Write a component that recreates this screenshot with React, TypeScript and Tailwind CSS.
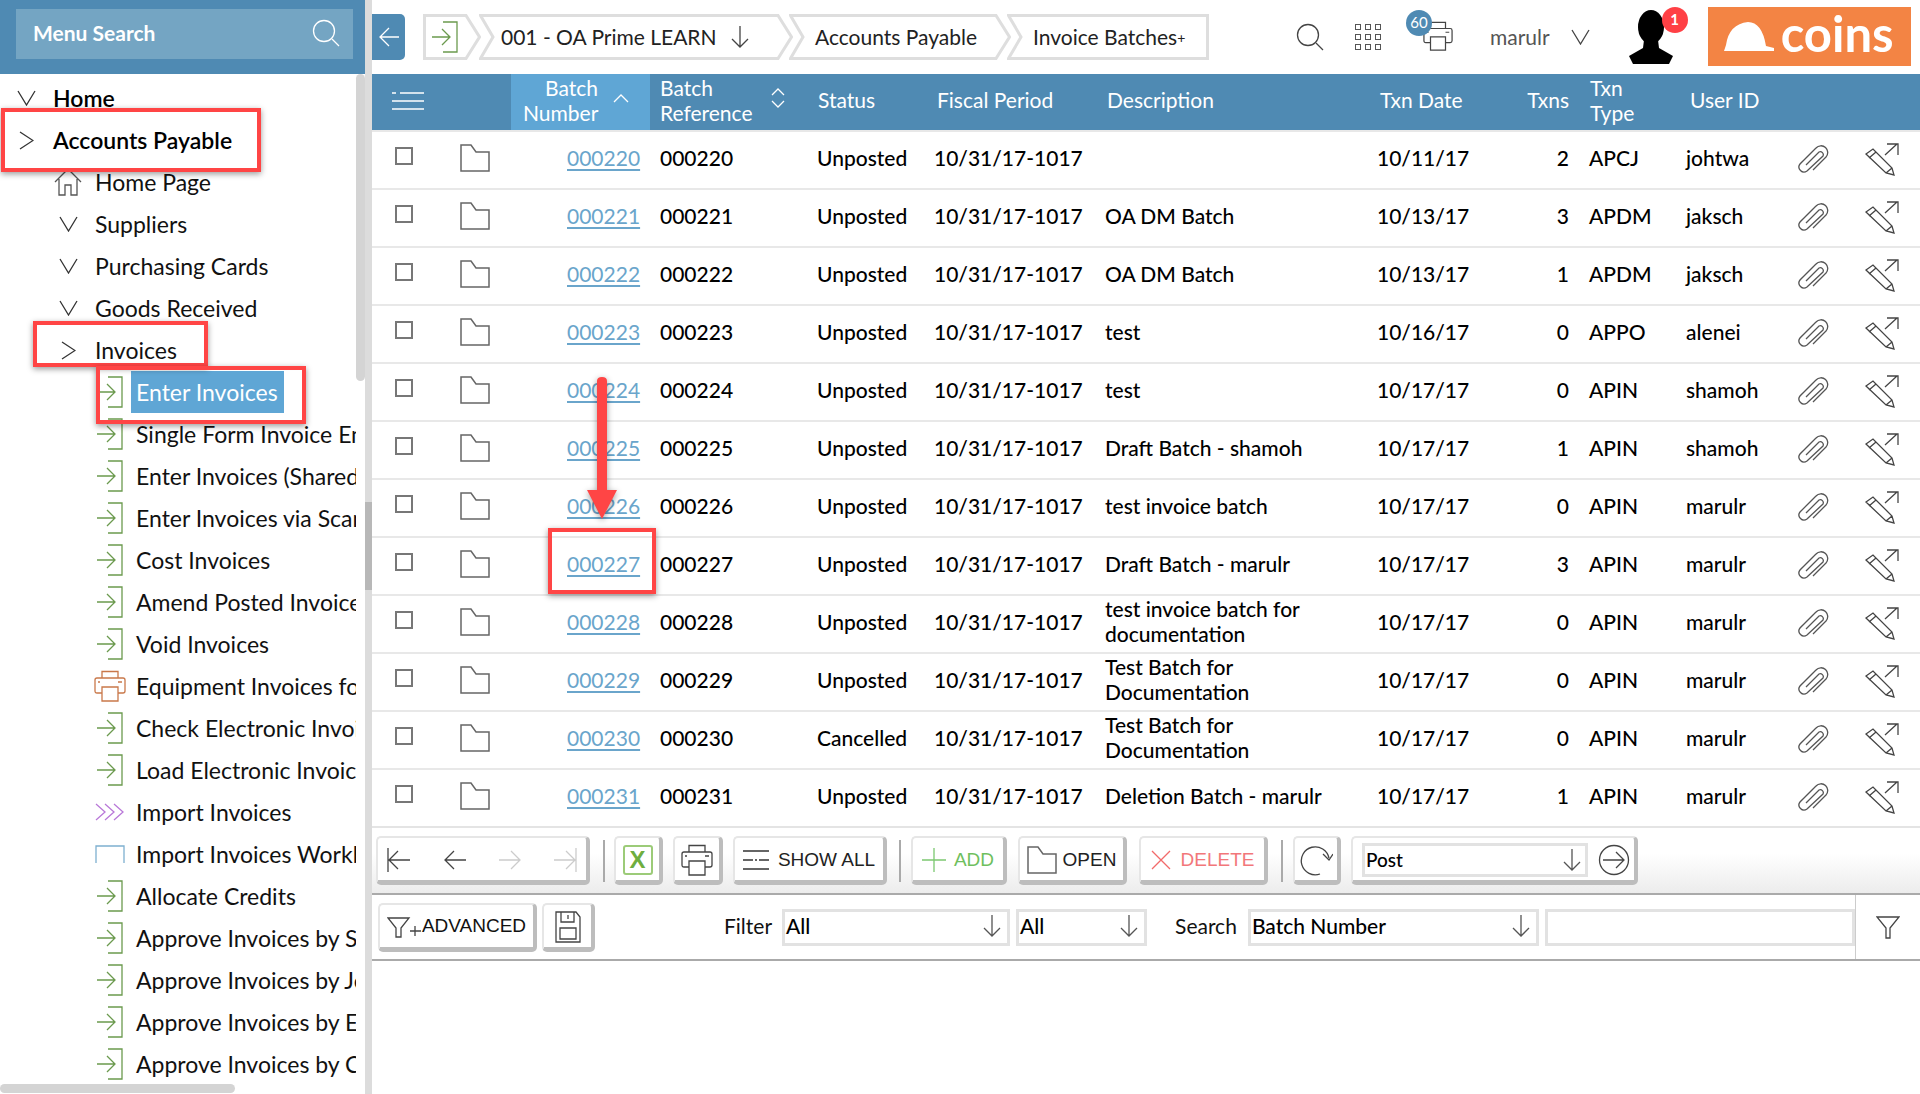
import * as React from "react";

const rows = [
  ["000220", "Unposted", "", "10/11/17", "2", "APCJ", "johtwa"],
  ["000221", "Unposted", "OA DM Batch", "10/13/17", "3", "APDM", "jaksch"],
  ["000222", "Unposted", "OA DM Batch", "10/13/17", "1", "APDM", "jaksch"],
  ["000223", "Unposted", "test", "10/16/17", "0", "APPO", "alenei"],
  ["000224", "Unposted", "test", "10/17/17", "0", "APIN", "shamoh"],
  ["000225", "Unposted", "Draft Batch - shamoh", "10/17/17", "1", "APIN", "shamoh"],
  ["000226", "Unposted", "test invoice batch", "10/17/17", "0", "APIN", "marulr"],
  ["000227", "Unposted", "Draft Batch - marulr", "10/17/17", "3", "APIN", "marulr"],
  ["000228", "Unposted", "test invoice batch for documentation", "10/17/17", "0", "APIN", "marulr"],
  ["000229", "Unposted", "Test Batch for Documentation", "10/17/17", "0", "APIN", "marulr"],
  ["000230", "Cancelled", "Test Batch for Documentation", "10/17/17", "0", "APIN", "marulr"],
  ["000231", "Unposted", "Deletion Batch - marulr", "10/17/17", "1", "APIN", "marulr"],
];

const menuItems: [string, string][] = [
  ["Enter Invoices", "enter"],
  ["Single Form Invoice Entry", "enter"],
  ["Enter Invoices (Shared Services)", "enter"],
  ["Enter Invoices via Scanning", "enter"],
  ["Cost Invoices", "enter"],
  ["Amend Posted Invoices", "enter"],
  ["Void Invoices", "enter"],
  ["Equipment Invoices for Review", "print"],
  ["Check Electronic Invoices", "enter"],
  ["Load Electronic Invoices", "enter"],
  ["Import Invoices", "import"],
  ["Import Invoices Workbench", "work"],
  ["Allocate Credits", "enter"],
  ["Approve Invoices by Supplier", "enter"],
  ["Approve Invoices by Job", "enter"],
  ["Approve Invoices by Employee", "enter"],
  ["Approve Invoices by Cost Code", "enter"],
];

function Ico({ w, h, vb, className, children }: { w: number; h: number; vb?: string; className?: string; children: React.ReactNode }) {
  return (
    <svg width={w} height={h} viewBox={vb ?? `0 0 ${w} ${h}`} fill="none" stroke="currentColor" strokeWidth="1.3" className={`shrink-0 ${className ?? ""}`}>
      {children}
    </svg>
  );
}

const Down = ({ className }: { className?: string }) => (
  <Ico w={21} h={16} className={className}><path d="M2 1 L10.5 15 L19 1" /></Ico>
);
const Right = ({ className }: { className?: string }) => (
  <Ico w={15} h={19} className={className}><path d="M1 1 L14 9.5 L1 18" /></Ico>
);
const ArrowDown = ({ className }: { className?: string }) => (
  <Ico w={20} h={24} className={className}><path d="M10 1 V22 M2 14 L10 22 L18 14" /></Ico>
);
const EnterIcon = () => (
  <Ico w={28} h={32} className="text-[#6b9a4e]"><path d="M12 1 H26 V31 H12 M1 16 H19 M11 8 L19 16 L11 24" /></Ico>
);
const PrinterIcon = ({ className, size = 32 }: { className?: string; size?: number }) => (
  <Ico w={size} h={size} vb="0 0 32 32" className={className}>
    <path d="M8 8 V1.5 H24 V8 M8 23 H3 Q1 23 1 21 V10 Q1 8 3 8 H29 Q31 8 31 10 V21 Q31 23 29 23 H24 M8 17 H24 V31 H8 Z M4 12 H6 M24 12 H28" />
  </Ico>
);
const Folder = ({ className }: { className?: string }) => (
  <Ico w={30} h={28} className={`text-[#666] ${className ?? ""}`}><path d="M1 1 H11 L16 8 H29 V27 H1 Z" strokeWidth="1.5" /></Ico>
);
const Clip = () => (
  <Ico w={32} h={28} className="text-[#555]">
    <path d="M9 20 L22 7 A3 3 0 0 1 26 11 L10 26 A5 5 0 0 1 3 19 L19 3 A6.5 6.5 0 0 1 29 12 L16 25" />
  </Ico>
);
const Pencil = () => (
  <Ico w={34} h={33} className="text-[#444]">
    <path d="M1 11 L8 6 L27 25 L29 32 L21 30 Z M4 15 L11 9 M21 30 L27 25 M20 12 L32 1 M22 1 H33 V12" />
  </Ico>
);
const SearchIcon = ({ className }: { className?: string }) => (
  <Ico w={28} h={28} className={className}><circle cx="12" cy="12" r="10.5" /><path d="M20 20 L27 27" /></Ico>
);

function Btn({ className, start, children }: { className?: string; start?: boolean; children: React.ReactNode }) {
  return (
    <div className={`flex h-[49px] items-center ${start ? "" : "justify-center"} rounded-[5px] border-2 border-[#e6e6e6] border-r-[4px] border-r-[#bdbdbd] border-b-[5px] border-b-[#bdbdbd] bg-white pt-[2px] font-['Liberation_Sans',sans-serif] text-[19px] ${className ?? ""}`}>
      {children}
    </div>
  );
}

const Sep = ({ className }: { className?: string }) => <div className={`h-[42px] w-[2px] bg-[#aaa] ${className ?? ""}`} />;

function Select({ label, className }: { label: string; className?: string }) {
  return (
    <div className={`flex h-[37px] items-center justify-between border-[3px] border-[#e2e2e2] bg-white pb-[2px] pl-[1px] pr-[5px] text-[21px] font-medium text-black ${className ?? ""}`}>
      <span>{label}</span>
      <ArrowDown className="text-[#555]" />
    </div>
  );
}

const gridCols = "grid grid-cols-[88px_51px_149px_157px_117px_171px_272px_123px_69px_117px_104px_60px_70px]";

function Sidebar() {
  return (
    <aside className="relative h-full w-[372px] shrink-0 overflow-hidden border-r-[7px] border-[#dcdcdc]">
      <div className="flex h-[74px] w-[372px] items-start bg-[#4f8ab3] pl-4 pt-[9px]">
        <div className="flex h-[50px] w-[337px] items-center justify-between bg-[#74a5c3] pb-[2px] pl-[17px] pr-[13px] text-[21px] font-bold text-white">
          <span>Menu Search</span>
          <SearchIcon />
        </div>
      </div>
      <div className="w-[356px] overflow-hidden pt-[3px] text-[23px] text-[#111]">
        <div className="flex h-[42px] items-center pl-4 font-semibold text-black">
          <Down className="mr-4 text-[#333]" /><span>Home</span>
        </div>
        <div className="flex h-[42px] items-center pl-[19px] font-semibold text-black">
          <Right className="mr-[19px] text-[#333]" /><span>Accounts Payable</span>
        </div>
        <div className="flex h-[42px] items-center pl-[54px]">
          <Ico w={28} h={28} className="mr-[13px] text-[#555]"><path d="M1 14 L14 1 L27 14 M5 11 V27 H11 V17 H17 V27 H23 V11" /></Ico>
          <span>Home Page</span>
        </div>
        {["Suppliers", "Purchasing Cards", "Goods Received"].map((t) => (
          <div key={t} className="flex h-[42px] items-center pl-[58px]">
            <Down className="mr-4 text-[#333]" /><span>{t}</span>
          </div>
        ))}
        <div className="flex h-[42px] items-center pl-[61px]">
          <Right className="mr-[19px] text-[#333]" /><span>Invoices</span>
        </div>
        {menuItems.map(([label, kind], i) => (
          <div key={label} className="flex h-[42px] items-center whitespace-nowrap pl-[94px]">
            <span className="flex w-[32px] shrink-0 justify-center">
              {kind === "enter" && <EnterIcon />}
              {kind === "print" && <PrinterIcon className="text-[#c9784a]" />}
              {kind === "import" && (
                <Ico w={30} h={18} className="text-[#b978d8]"><path d="M1 1 L10 9 L1 17 M10 1 L19 9 L10 17 M19 1 L28 9 L19 17" /></Ico>
              )}
              {kind === "work" && (
                <Ico w={30} h={18} className="text-[#7eb0d0]"><path d="M1 18 V1 H29 V18" /></Ico>
              )}
            </span>
            <span className={i === 0 ? "ml-[5px] flex h-[42px] w-[153px] items-center bg-[#5fa6d5] pl-[5px] text-white" : "ml-[10px]"}>{label}</span>
          </div>
        ))}
      </div>
      {/* scrollbars */}
      <div className="absolute right-0 top-[74px] h-[307px] w-[9px] rounded-[5px] bg-[#d4d4d4]" />
      <div className="absolute bottom-[1px] left-0 h-[9px] w-[235px] rounded-[5px] bg-[#d4d4d4]" />
    </aside>
  );
}

function Crumb({ w, first, last, className, children }: { w: number; first?: boolean; last?: boolean; className?: string; children: React.ReactNode }) {
  const outline = `M1.5 1.5 H${last ? w - 1.5 : w - 15} ${last ? "V44.5" : `L${w - 1.5} 23 L${w - 15} 44.5`} H1.5 ${first ? "Z" : "L14 23 Z"}`;
  return (
    <div className={`relative flex h-[46px] items-center ${className ?? ""}`} style={{ width: w }}>
      <svg width={w} height={46} viewBox={`0 0 ${w} 46`} fill="#fff" stroke="#dedede" strokeWidth="3" className="absolute left-0 top-0">
        <path d={outline} />
      </svg>
      <div className="relative flex items-center">{children}</div>
    </div>
  );
}

function TopBar() {
  return (
    <div className="flex h-[74px] items-start">
      <div className="mt-[14px] flex h-[46px] w-[33px] items-center justify-center rounded-r-[5px] bg-[#4f8ab3] text-white">
        <Ico w={22} h={24}><path d="M21 12 H2 M11 3 L2 12 L11 21" /></Ico>
      </div>
      <div className="ml-[18px] mt-[14px] flex h-[46px] text-[21px] text-[#222]">
        <Crumb w={58} first className="pl-[8px]"><EnterIcon /></Crumb>
        <Crumb w={314} className="-ml-[2px] pl-[22px]">
          <span>001 - OA Prime LEARN</span>
          <ArrowDown className="ml-[13px] text-[#444]" />
        </Crumb>
        <Crumb w={222} className="-ml-[4px] pl-[26px]"><span>Accounts Payable</span></Crumb>
        <Crumb w={202} last className="-ml-[4px] pl-[26px]"><span>Invoice Batches</span><span className="text-[14px]">+</span></Crumb>
      </div>
      <div className="ml-[87px] flex h-[74px] items-center pb-[1px]">
        <SearchIcon className="text-[#444]" />
        <div className="ml-[31px] grid grid-cols-3 gap-[4px]">
          {Array.from({ length: 9 }).map((_, i) => (
            <div key={i} className="h-[6px] w-[6px] border border-[#555]" />
          ))}
        </div>
        <div className="relative ml-[42px] h-[32px] w-[30px]">
          <PrinterIcon className="text-[#444]" size={30} />
          <span className="absolute -left-[17px] -top-[11px] flex h-[26px] w-[26px] items-center justify-center rounded-full bg-[#4f8ab3] text-[15px] text-white">60</span>
        </div>
        <span className="ml-[37px] text-[21px] text-[#555]">marulr</span>
        <Down className="ml-[20px] text-[#444]" />
        <div className="relative ml-[36px] h-[54px] w-[48px]">
          <svg width="48" height="54" viewBox="0 0 48 54" fill="#000">
            <ellipse cx="24" cy="17" rx="13" ry="17" />
            <path d="M17 30 H31 L32 38 L46 46 L42 54 H6 L2 46 L16 38 Z" />
          </svg>
          <span className="absolute -right-[13px] -top-[3px] flex h-[26px] w-[26px] items-center justify-center rounded-full bg-[#ff4045] text-[15px] font-bold text-white">1</span>
        </div>
        <div className="ml-[33px] flex h-[59px] w-[203px] items-center bg-[#f38444] pb-[1px] pl-[16px] text-white">
          <svg width="50" height="29" viewBox="0 0 50 29" fill="#fff" className="mt-[1px] shrink-0">
            <path d="M0 29 L2 23 Q5 2 24 0 Q38 0 42 24 L50 26 V29 Z" />
          </svg>
          <span className="ml-[7px] pb-[6px] text-[49px] font-bold leading-none">coins</span>
        </div>
      </div>
    </div>
  );
}

function TableHeader() {
  return (
    <div className={`${gridCols} h-[56px] items-center bg-[#4f8ab3] pb-[5px] text-[21px] leading-[25px] text-white`}>
      <div className="flex pl-[20px] pt-[2px]">
        <Ico w={32} h={20}><path d="M0 2 H4 M8 2 H32 M0 10 H32 M0 18 H32" /></Ico>
      </div>
      <div />
      <div className="-mb-[5px] mr-[10px] flex h-[56px] items-center bg-[#5fa6d5] pb-[5px] pl-[12px]">
        <div className="w-[75px] text-right">Batch Number</div>
        <Ico w={16} h={10} className="mb-[4px] ml-[15px]"><path d="M1 9 L8 2 L15 9" /></Ico>
      </div>
      <div className="flex items-center">
        <span className="w-[100px]">Batch Reference</span>
        <Ico w={14} h={22} className="mb-[4px] ml-[11px]"><path d="M1 8 L7 2 L13 8 M1 14 L7 20 L13 14" /></Ico>
      </div>
      <div className="pl-[1px]">Status</div>
      <div className="pl-[3px]">Fiscal Period</div>
      <div className="pl-[2px]">Description</div>
      <div className="pl-[3px]">Txn Date</div>
      <div className="text-right">Txns</div>
      <div className="w-[60px] pl-[21px]">Txn Type</div>
      <div className="pl-[4px]">User ID</div>
      <div />
      <div />
    </div>
  );
}

function Row({ r }: { r: string[] }) {
  return (
    <div className={`${gridCols} h-[58px] items-center border-t-2 border-[#e8e8e8] pb-[6px] text-[21px] font-medium leading-[25px] text-black`}>
      <div className="pb-[2px] pl-[23px]"><div className="h-[18px] w-[18px] border-2 border-[#777]" /></div>
      <div className="pt-[2px]"><Folder /></div>
      <div className="pl-[56px] font-normal text-[#6aa5cb] underline decoration-2 underline-offset-[3px]">{r[0]}</div>
      <div>{r[0]}</div>
      <div>{r[1]}</div>
      <div>10/31/17-1017</div>
      <div className="pr-[24px]">{r[2]}</div>
      <div>{r[3]}</div>
      <div className="text-right">{r[4]}</div>
      <div className="pl-[20px]">{r[5]}</div>
      <div>{r[6]}</div>
      <div className="pl-[7px] pt-[4px]"><Clip /></div>
      <div className="pl-[15px] pt-[4px]"><Pencil /></div>
    </div>
  );
}

function Toolbar() {
  return (
    <div className="flex h-[69px] items-center border-b-2 border-t-2 border-b-[#aaa] border-t-[#e4e4e4] bg-gradient-to-b from-white from-40% to-[#ececec] pl-[4px]">
      <Btn start className="w-[214px] pl-[9px]">
        <Ico w={24} h={26} className="text-[#444]"><path d="M1 1 V25 M23 13 H2 M11 4 L2 13 L11 22" /></Ico>
        <Ico w={24} h={24} className="ml-[32px] text-[#444]"><path d="M23 12 H2 M11 3 L2 12 L11 21" /></Ico>
        <Ico w={24} h={24} className="ml-[31px] text-[#ccc]"><path d="M1 12 H22 M13 3 L22 12 L13 21" /></Ico>
        <Ico w={24} h={26} className="ml-[31px] text-[#ccc]"><path d="M23 1 V25 M1 13 H22 M13 4 L22 13 L13 22" /></Ico>
      </Btn>
      <Sep className="ml-[13px]" />
      <Btn className="ml-[9px] w-[49px]">
        <span className="flex h-[30px] w-[30px] items-center justify-center rounded-[3px] border-2 border-[#9ccb78] text-[24px] font-bold text-[#6fae3f]">X</span>
      </Btn>
      <Btn className="ml-[10px] w-[50px]"><PrinterIcon className="text-[#444]" /></Btn>
      <Btn className="ml-[10px] w-[154px] gap-[9px]">
        <Ico w={26} h={20} className="text-[#333]"><path d="M0 1 H26 M0 10 H10 M12 10 H14 M16 10 H26 M0 19 H26" /></Ico>
        <span className="text-[#222]">SHOW ALL</span>
      </Btn>
      <Sep className="ml-[12px]" />
      <Btn className="ml-[10px] w-[96px] gap-[8px] text-[#6fbf5e]">
        <Ico w={24} h={24} className="text-[#7cc870]"><path d="M12 0 V24 M0 12 H24" /></Ico>
        <span>ADD</span>
      </Btn>
      <Btn className="ml-[11px] w-[109px] gap-[6px] text-[#222]">
        <Folder />
        <span>OPEN</span>
      </Btn>
      <Btn className="ml-[12px] w-[129px] gap-[10px] text-[#f2777a]">
        <Ico w={20} h={20} className="text-[#f26a6a]"><path d="M1 1 L19 19 M19 1 L1 19" /></Ico>
        <span>DELETE</span>
      </Btn>
      <Sep className="ml-[13px]" />
      <Btn className="ml-[10px] w-[48px]">
        <Ico w={34} h={32} className="text-[#444]"><path d="M30 14 A14 14 0 1 0 21 30 M24 10 L30 16 L34 10" /></Ico>
      </Btn>
      <Btn start className="ml-[10px] w-[287px] pl-[9px]">
        <div className="flex h-[34px] w-[226px] items-center justify-between border-[3px] border-[#e2e2e2] pl-[1px] pr-[3px] font-['Lato',sans-serif] text-[19px] font-medium text-black">
          <span>Post</span>
          <ArrowDown className="text-[#555]" />
        </div>
        <Ico w={32} h={32} className="ml-[10px] text-[#444]"><circle cx="16" cy="16" r="14.5" /><path d="M5 16 H26 M18 8 L26 16 L18 24" /></Ico>
      </Btn>
    </div>
  );
}

function FilterBar() {
  return (
    <div className="flex h-[66px] items-center border-b-2 border-[#aaa] pl-[6px] text-[21px] text-[#111]">
      <Btn className="w-[159px] gap-[1px] text-[#111]">
        <Ico w={34} h={22} className="text-[#444]"><path d="M1 2 H22 L14 12 V21 H9 V12 Z M23 15 H34 M28 10 V20" /></Ico>
        <span>ADVANCED</span>
      </Btn>
      <Btn className="ml-[5px] w-[53px]">
        <Ico w={26} h={32} className="text-[#444]"><path d="M1 1 H21 L25 6 V31 H1 Z M6 1 V11 H19 V1 M5 17 H21 V28 H5 Z M13 4 V8" /></Ico>
      </Btn>
      <span className="ml-[129px] pb-[2px]">Filter</span>
      <Select label="All" className="ml-[10px] w-[228px]" />
      <Select label="All" className="ml-[6px] w-[131px]" />
      <span className="ml-[28px] pb-[2px]">Search</span>
      <Select label="Batch Number" className="ml-[11px] w-[291px]" />
      <div className="ml-[6px] h-[37px] w-[310px] border-[3px] border-[#e2e2e2]" />
      <div className="flex h-[64px] flex-1 items-center justify-center border-l border-[#ccc]">
        <Ico w={24} h={24} className="text-[#444]"><path d="M1 2 H23 L14 13 V23 H10 V13 Z" /></Ico>
      </div>
    </div>
  );
}

export default function App() {
  return (
    <div className="relative flex h-[1094px] w-[1920px] overflow-hidden bg-white font-['Lato',sans-serif]">
      <Sidebar />
      <main className="flex min-w-0 flex-1 flex-col">
        <TopBar />
        <TableHeader />
        {rows.map((r) => <Row key={r[0]} r={r} />)}
        <Toolbar />
        <FilterBar />
      </main>

      {/* divider scroll thumb */}
      <div className="absolute left-[365px] top-[502px] h-[88px] w-[7px] bg-[#b8b8b8]" />

      {/* annotations drawn over the screenshot */}
      <div className="absolute left-[1px] top-[108px] h-[64px] w-[260px] border-4 border-[#ff4545] shadow-[0_2px_6px_rgba(0,0,0,0.4)]" />
      <div className="absolute left-[33px] top-[321px] h-[46px] w-[175px] border-4 border-[#ff4545] shadow-[0_2px_6px_rgba(0,0,0,0.4)]" />
      <div className="absolute left-[96px] top-[366px] h-[58px] w-[210px] border-4 border-[#ff4545] shadow-[0_2px_6px_rgba(0,0,0,0.4)]" />
      <div className="absolute left-[548px] top-[528px] h-[66px] w-[108px] border-4 border-[#ff4545] shadow-[0_2px_6px_rgba(0,0,0,0.4)]" />
      <svg width="32" height="144" viewBox="0 0 32 144" fill="#ff4545" className="absolute left-[586px] top-[376px] drop-shadow-[0_2px_3px_rgba(0,0,0,0.4)]">
        <path d="M11 5 Q11 1 16 1 Q21 1 21 5 V114 H31 L16 143 L1 114 H11 Z" />
      </svg>
    </div>
  );
}
